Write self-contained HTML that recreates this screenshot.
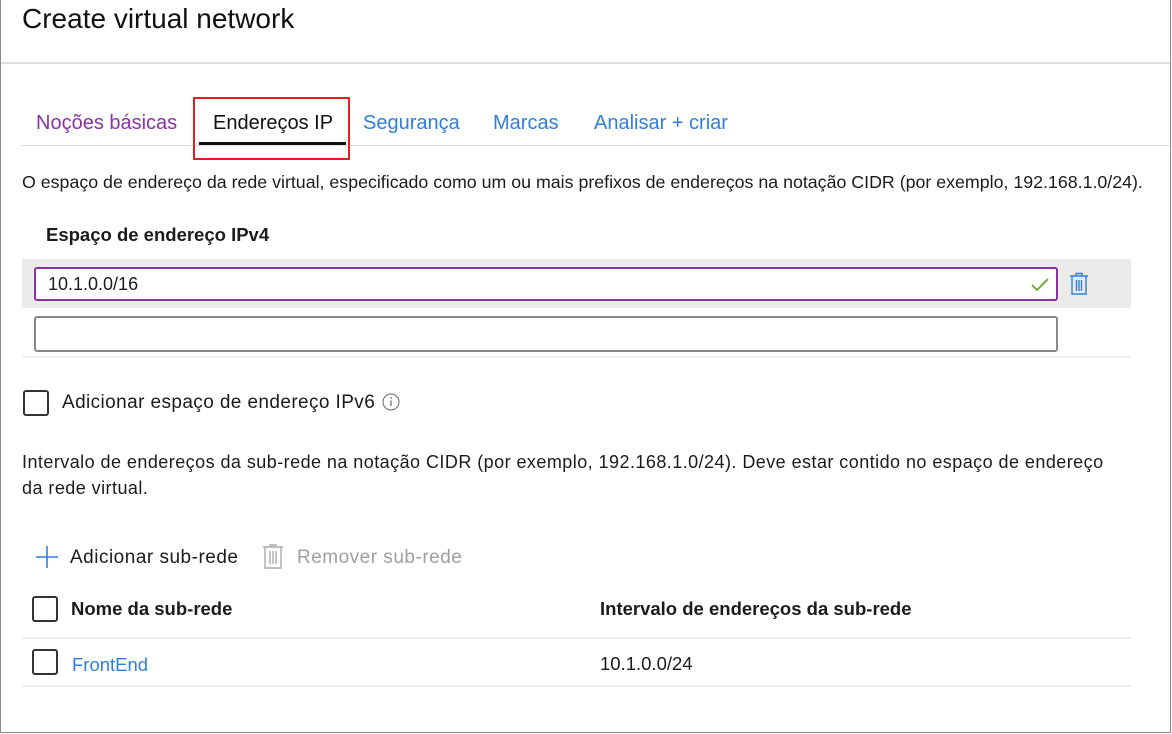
<!DOCTYPE html>
<html><head><meta charset="utf-8"><style>
*{margin:0;padding:0;box-sizing:border-box}
body{width:1172px;height:734px;background:#fff;font-family:"Liberation Sans",sans-serif;color:#1b1b1b;position:relative;overflow:hidden}
.a{position:absolute;white-space:nowrap}
.t{font-size:18px}
.cb{position:absolute;width:26px;height:26px;border:2px solid #333;border-radius:3px;background:#fff}
</style></head><body>
<div class="a" style="left:0;top:0;width:1171px;height:733px;border:1px solid #8a8a8a;border-top:none"></div>
<div class="a" style="left:22px;top:3px;font-size:28px;color:#111">Create virtual network</div>
<div class="a" style="left:1px;top:62px;width:1169px;height:2px;background:#ddd"></div>
<div class="a" style="left:20px;top:145px;width:1150px;height:1px;background:#ddd"></div>
<div class="a" style="left:36px;top:112px;font-size:20px;color:#8a31a6">Noções básicas</div>
<div class="a" style="left:213px;top:112px;font-size:20px;color:#111">Endereços IP</div>
<div class="a" style="left:199px;top:142px;width:147px;height:3px;background:#111"></div>
<div class="a" style="left:193px;top:97px;width:157px;height:63px;border:2px solid #e81c24"></div>
<div class="a" style="left:363px;top:112px;font-size:20px;color:#2f7ee0">Segurança</div>
<div class="a" style="left:493px;top:112px;font-size:20px;color:#2f7ee0">Marcas</div>
<div class="a" style="left:594px;top:112px;font-size:20px;color:#2f7ee0">Analisar + criar</div>
<div class="a" style="left:22px;top:172px;font-size:17.8px">O espaço de endereço da rede virtual, especificado como um ou mais prefixos de endereços na notação CIDR (por exemplo, 192.168.1.0/24).</div>
<div class="a" style="left:46px;top:224px;font-weight:bold;font-size:18.5px">Espaço de endereço IPv4</div>
<div class="a" style="left:22px;top:259px;width:1109px;height:49px;background:#ebebea"></div>
<div class="a" style="left:34px;top:267px;width:1024px;height:34px;border:2px solid #8a31a6;border-radius:3px;background:#fff"></div>
<div class="a t" style="left:48px;top:274px">10.1.0.0/16</div>
<svg class="a" style="left:1030px;top:277px" width="20" height="16"><path d="M2 8 L7 13 L18 2" stroke="#5ea21b" stroke-width="1.6" fill="none"/></svg>
<svg class="a" style="left:1068px;top:272px" width="22" height="24"><path d="M2 4H20M8 4V1.5H14V4M4 4V22H18V4M8.5 8V19M11 8V19M13.5 8V19" stroke="#2f7ee0" stroke-width="1.4" fill="none"/></svg>
<div class="a" style="left:34px;top:316px;width:1024px;height:36px;border:2px solid #888;border-radius:3px"></div>
<div class="a" style="left:22px;top:356px;width:1109px;height:2px;background:#eee"></div>
<div class="cb" style="left:23px;top:390px"></div>
<div class="a" style="left:62px;top:392px;font-size:19px;letter-spacing:0.4px">Adicionar espaço de endereço IPv6</div>
<svg class="a" style="left:381px;top:392px" width="20" height="20"><circle cx="10" cy="10" r="8" stroke="#666" stroke-width="1" fill="none"/><path d="M10 8.5V14" stroke="#666" stroke-width="1.2"/><circle cx="10" cy="6" r="0.9" fill="#666"/></svg>
<div class="a" style="left:22px;top:452px;font-size:18px;letter-spacing:0.45px">Intervalo de endereços da sub-rede na notação CIDR (por exemplo, 192.168.1.0/24). Deve estar contido no espaço de endereço</div>
<div class="a" style="left:22px;top:478px;font-size:18px;letter-spacing:0.45px">da rede virtual.</div>
<svg class="a" style="left:35px;top:545px" width="24" height="24"><path d="M12 1V23M1 12H23" stroke="#2f7ee0" stroke-width="1.6"/></svg>
<div class="a" style="left:70px;top:547px;font-size:19px;letter-spacing:0.5px">Adicionar sub-rede</div>
<svg class="a" style="left:262px;top:544px" width="22" height="26"><path d="M1 3H21M8 3V1H14V3M3 3V24H19V3M8 7V20M11 7V20M14 7V20" stroke="#aaa" stroke-width="1.4" fill="none"/></svg>
<div class="a" style="left:297px;top:547px;font-size:19px;letter-spacing:0.5px;color:#a0a0a0">Remover sub-rede</div>
<div class="cb" style="left:32px;top:596px"></div>
<div class="a" style="left:71px;top:598px;font-weight:bold;font-size:18.5px">Nome da sub-rede</div>
<div class="a" style="left:600px;top:598px;font-weight:bold;font-size:18.5px">Intervalo de endereços da sub-rede</div>
<div class="a" style="left:22px;top:637px;width:1109px;height:2px;background:#eee"></div>
<div class="cb" style="left:32px;top:649px"></div>
<div class="a" style="left:72px;top:654px;font-size:18.5px;color:#2f7ee0">FrontEnd</div>
<div class="a" style="left:600px;top:653px;font-size:18.5px">10.1.0.0/24</div>
<div class="a" style="left:22px;top:685px;width:1109px;height:2px;background:#eee"></div>
</body></html>
